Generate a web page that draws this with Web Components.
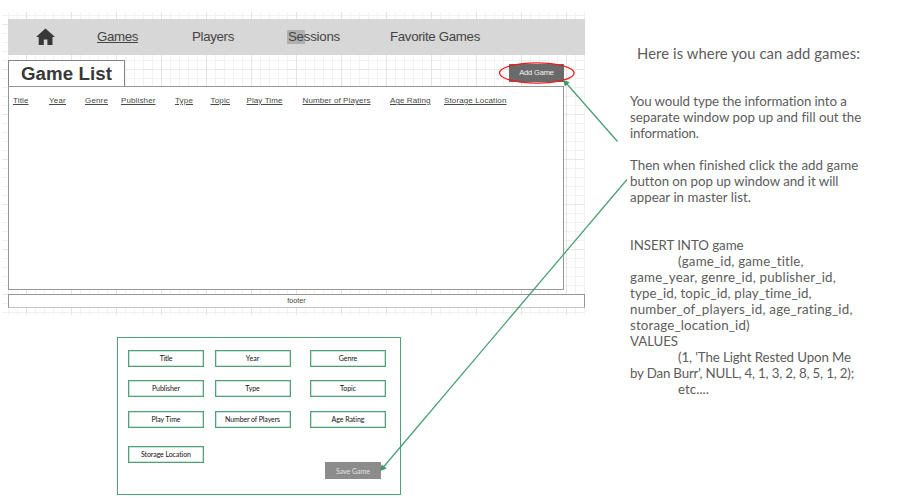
<!DOCTYPE html>
<html lang="en">
<head>
<meta charset="utf-8">
<title>Game List</title>
<style>
html,body{margin:0;background:#fff}
body{width:905px;height:498px;overflow:hidden}
</style>
</head>
<body>
<game-slide></game-slide>
<script>
const define = (name, html, after) => {
  const t = document.createElement('template');
  t.innerHTML = html;
  customElements.define(name, class extends HTMLElement {
    constructor() {
      super();
      this.attachShadow({mode: 'open'}).append(t.content.cloneNode(true));
    }
    connectedCallback() { if (after) after(this, this.shadowRoot); }
  });
};

// A single line of text tracked to an exact width.
define('fit-text', `<style>
:host{display:inline-block;white-space:pre}
span{display:inline-block}
:host([u]) span{text-decoration:underline;text-decoration-thickness:1px;text-underline-offset:1px}
</style><span><slot></slot></span>`, (el, root) => {
  const s = root.querySelector('span');
  const w = +el.getAttribute('w');
  const n = s.getBoundingClientRect().width;
  if (w && n) {
    s.style.letterSpacing = ((w - n) / el.textContent.length) + 'px';
    el.style.width = w + 'px';
  }
});

define('nav-bar', `<style>
:host{display:grid;grid-template-columns:89px 95px 96px 102px 1fr;align-items:center;height:36px;background:#d7d7d7;color:#444;font-size:13.3px;line-height:18px}
svg{display:block;margin-left:28px;width:19px;height:18px}
.sel{background:linear-gradient(#b0b0b0,#b0b0b0) no-repeat 0 2px/18px 14px;margin-left:-1px;padding-left:1px}
</style>
<svg viewBox="0 0 19 18"><path fill="#383838" d="M9.5 0.5L0 9h2.7v8h5.1v-5.4h3.6V17h5.1V9H19z"/></svg>
<div><fit-text u w="41">Games</fit-text></div>
<div><fit-text w="42">Players</fit-text></div>
<div class="sel"><fit-text w="52">Sessions</fit-text></div>
<div><fit-text w="90">Favorite Games</fit-text></div>`);

define('game-button', `<style>
:host{display:flex;align-items:center;justify-content:center;color:#f4f4f4;background:#6a6a6a;font-size:7.5px;line-height:10px}
</style><slot></slot>`);

define('game-table', `<style>
:host{display:block;box-sizing:border-box;width:556px;height:204px;border:1px solid #969696;background:#fff}
.head{display:grid;grid-template-columns:36px 36px 36px 54px 35.5px 36px 56px 87.5px 54px 1fr;padding:8px 0 0 4px;font-size:8px;line-height:11px;color:#484848}
</style>
<div class="head">
<div><fit-text u w="15.5">Title</fit-text></div><div><fit-text u w="17">Year</fit-text></div><div><fit-text u w="23">Genre</fit-text></div><div><fit-text u w="34.5">Publisher</fit-text></div><div><fit-text u w="18">Type</fit-text></div><div><fit-text u w="19.5">Topic</fit-text></div><div><fit-text u w="36">Play Time</fit-text></div><div><fit-text u w="68">Number of Players</fit-text></div><div><fit-text u w="40.5">Age Rating</fit-text></div><div><fit-text u w="62.5">Storage Location</fit-text></div>
</div>`);

define('list-mockup', `<style>
:host{display:block;box-sizing:border-box;width:583px;height:303px;padding:7px 0 0 6px;font-family:"Liberation Sans",Arial,sans-serif;
background:
linear-gradient(90deg,#e4e4e4 1px,transparent 1px) 24px 0/45px 45px,
linear-gradient(#e8e8e8 1px,transparent 1px) 0 12px/45px 45px,
linear-gradient(90deg,#f1f1f1 1px,transparent 1px) 6px 0/9px 9px,
linear-gradient(#f1f1f1 1px,transparent 1px) 0 3px/9px 9px,#fff}
.row{display:flex;justify-content:space-between;width:556px;height:26px;padding-top:5px}
.title{box-sizing:border-box;width:117px;height:26px;border:1px solid #858585;border-bottom:0;background:#fff;padding-left:12px;font:bold 18.7px/25px "Liberation Sans",Arial,sans-serif;color:#383838}
game-button{width:55px;height:18px;margin-top:4px}
.foot{box-sizing:border-box;width:577px;height:14px;border:1px solid #969696;border-bottom-color:#c4c4c4;background:#fff;margin-top:4px;text-align:center;font-size:7.2px;line-height:12px;color:#444}
</style>
<nav-bar></nav-bar>
<div class="row"><div class="title"><fit-text w="91">Game List</fit-text></div><game-button><fit-text w="34.5">Add Game</fit-text></game-button></div>
<game-table></game-table>
<div class="foot"><fit-text w="18.5">footer</fit-text></div>`);

define('form-field', `<style>
:host{display:flex;align-items:center;justify-content:center;box-sizing:border-box;height:17px;border:1px solid #4fa278;box-shadow:inset 0 0 0 .5px #9bcab0;background:#fff;font-size:7px;line-height:9px;color:#111}
</style><slot></slot>`);

define('add-form', `<style>
:host{display:block;box-sizing:border-box;width:284px;height:158px;margin:22px 0 0 117px;border:1px solid #4fa278;font-family:Lato,sans-serif}
.grid{display:grid;grid-template-columns:76px 76px 76px;grid-template-rows:30px 31px 35px 17px;column-gap:10.5px;padding:12px 0 0 10px}
.grid>:nth-child(3n){margin-left:9px;margin-right:-9px}
game-button{width:56px;height:17px;margin:-1px 0 0 207px;background:#8c8c8c;color:#e2e2e2;font-size:7px}
</style>
<div class="grid">
<form-field><fit-text w="12.5">Title</fit-text></form-field><form-field><fit-text w="13.5">Year</fit-text></form-field><form-field><fit-text w="18.5">Genre</fit-text></form-field>
<form-field><fit-text w="28">Publisher</fit-text></form-field><form-field><fit-text w="14.5">Type</fit-text></form-field><form-field><fit-text w="16">Topic</fit-text></form-field>
<form-field><fit-text w="29">Play Time</fit-text></form-field><form-field><fit-text w="55">Number of Players</fit-text></form-field><form-field><fit-text w="33">Age Rating</fit-text></form-field>
<form-field><fit-text w="50">Storage Location</fit-text></form-field>
</div>
<game-button><fit-text w="34">Save Game</fit-text></game-button>`);

define('slide-notes', `<style>
:host{display:block;padding:44px 0 0 45px;font:13.3px/16px Lato,sans-serif;color:#5c5c5c}
h1{margin:0 0 31px 7px;font-size:14.8px;line-height:18px;font-weight:400}
p{margin:0 0 16px}
p:nth-of-type(2){margin-bottom:32px}
p>*{display:block}
.in{padding-left:48px}
</style>
<h1><fit-text w="223">Here is where you can add games:</fit-text></h1>
<p><fit-text w="217">You would type the information into a</fit-text><fit-text w="231">separate window pop up and fill out the</fit-text><fit-text w="69">information.</fit-text></p>
<p><fit-text w="228">Then when finished click the add game</fit-text><fit-text w="208">button on pop up window and it will</fit-text><fit-text w="121">appear in master list.</fit-text></p>
<p><fit-text w="113.5">INSERT INTO game</fit-text><fit-text class="in" w="126">(game_id, game_title,</fit-text><fit-text w="206">game_year, genre_id, publisher_id,</fit-text><fit-text w="182">type_id, topic_id, play_time_id,</fit-text><fit-text w="223">number_of_players_id, age_rating_id,</fit-text><fit-text w="120">storage_location_id)</fit-text><fit-text w="48">VALUES</fit-text><fit-text class="in" w="173">(1, 'The Light Rested Upon Me</fit-text><fit-text w="224">by Dan Burr', NULL, 4, 1, 3, 2, 8, 5, 1, 2);</fit-text><fit-text class="in" w="31">etc....</fit-text></p>`);

define('callout-layer', `<style>
:host{position:absolute;inset:0;pointer-events:none}
svg{display:block}
</style>
<svg width="905" height="498" viewBox="0 0 905 498" fill="none">
<ellipse cx="536.8" cy="73" rx="37.3" ry="10.2" stroke="#ee1c1c" stroke-width="1.3"/>
<g stroke="#459c70" stroke-width="1.2"><path d="M617.5 141.5L567 84"/><path d="M627 179.5L383.5 467"/></g>
<g fill="#3f986a"><path d="M563.2 80L564.8 86.6L569.8 82.2z"/><path d="M380 471L381.6 464.4L386.8 468.6z"/></g>
</svg>`);

define('game-slide', `<style>
:host{position:relative;display:grid;grid-template-columns:585px 320px;width:905px;height:498px;background:#fff}
list-mockup{margin:12px 0 0 2px}
</style>
<div><list-mockup></list-mockup><add-form></add-form></div>
<slide-notes></slide-notes>
<callout-layer></callout-layer>`);
</script>
</body>
</html>
